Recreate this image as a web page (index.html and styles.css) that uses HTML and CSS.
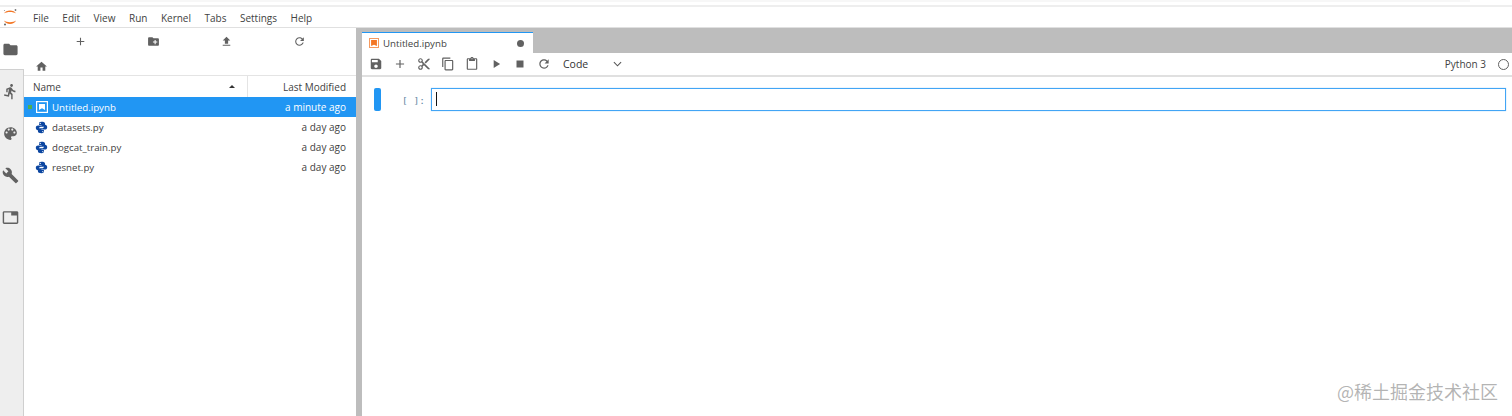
FILE: index.html
```html
<!DOCTYPE html>
<html lang="en">
<head>
<meta charset="utf-8">
<title>JupyterLab</title>
<link rel="stylesheet" href="styles.css">
</head>
<body>
<svg class="defs" aria-hidden="true">
  <defs>
    <symbol id="i-folder" viewBox="0 0 24 24"><path d="M10 4H4c-1.1 0-2 .9-2 2v12c0 1.1.9 2 2 2h16c1.1 0 2-.9 2-2V8c0-1.1-.9-2-2-2h-8l-2-2z"/></symbol>
    <symbol id="i-add" viewBox="0 0 24 24"><path d="M19 13h-6v6h-2v-6H5v-2h6V5h2v6h6v2z"/></symbol>
    <symbol id="i-newfolder" viewBox="0 0 24 24"><path d="M20 6h-8l-2-2H4c-1.11 0-1.99.89-1.99 2L2 18c0 1.11.89 2 2 2h16c1.11 0 2-.89 2-2V8c0-1.11-.89-2-2-2zm-1 8h-3v3h-2v-3h-3v-2h3V9h2v3h3v2z"/></symbol>
    <symbol id="i-upload" viewBox="0 0 24 24"><path d="M9 16h6v-6h4l-7-7-7 7h4zm-4 2h14v2H5z"/></symbol>
    <symbol id="i-refresh" viewBox="0 0 24 24"><path d="M17.65 6.35C16.2 4.9 14.21 4 12 4c-4.42 0-7.99 3.58-7.99 8s3.57 8 7.99 8c3.73 0 6.84-2.55 7.73-6h-2.08c-.82 2.33-3.04 4-5.65 4-3.31 0-6-2.69-6-6s2.69-6 6-6c1.66 0 3.14.69 4.22 1.78L13 11h7V4l-2.35 2.35z"/></symbol>
    <symbol id="i-home" viewBox="0 0 24 24"><path d="M10 20v-6h4v6h5v-8h3L12 3 2 12h3v8z"/></symbol>
    <symbol id="i-running" viewBox="0 0 24 24"><path d="M13.49 5.48c1.1 0 2-.9 2-2s-.9-2-2-2-2 .9-2 2 .9 2 2 2zm-3.6 13.9l1-4.4 2.1 2v6h2v-7.5l-2.1-2 .6-3c1.3 1.5 3.3 2.5 5.5 2.5v-2c-1.9 0-3.5-1-4.3-2.4l-1-1.6c-.4-.6-1-1-1.7-1-.3 0-.5.1-.8.1l-5.2 2.2v4.7h2v-3.4l1.8-.7-1.6 8.1-4.9-1-.4 2 7 1.4z"/></symbol>
    <symbol id="i-palette" viewBox="0 0 24 24"><path d="M12 3c-4.97 0-9 4.03-9 9s4.03 9 9 9c.83 0 1.5-.67 1.5-1.5 0-.39-.15-.74-.39-1.01-.23-.26-.38-.61-.38-.99 0-.83.67-1.5 1.5-1.5H16c2.76 0 5-2.24 5-5 0-4.42-4.03-8-9-8zm-5.5 9c-.83 0-1.5-.67-1.5-1.5S5.67 9 6.5 9 8 9.67 8 10.5 7.33 12 6.5 12zm3-4C8.67 8 8 7.33 8 6.5S8.67 5 9.5 5s1.5.67 1.5 1.5S10.33 8 9.5 8zm5 0c-.83 0-1.5-.67-1.5-1.5S13.67 5 14.5 5s1.5.67 1.5 1.5S15.33 8 14.5 8zm3 4c-.83 0-1.5-.67-1.5-1.5S16.67 9 17.5 9s1.5.67 1.5 1.5-.67 1.5-1.5 1.5z"/></symbol>
    <symbol id="i-build" viewBox="0 0 24 24"><path d="M22.7 19l-9.1-9.1c.9-2.3.4-5-1.5-6.9-2-2-5-2.4-7.4-1.3L9 6 6 9 1.6 4.7C.4 7.1.9 10.1 2.9 12.1c1.9 1.9 4.6 2.4 6.9 1.5l9.1 9.1c.4.4 1 .4 1.4 0l2.3-2.3c.5-.4.5-1.1.1-1.4z"/></symbol>
    <symbol id="i-tab" viewBox="0 0 24 24"><path d="M21 3H3c-1.1 0-2 .9-2 2v14c0 1.1.9 2 2 2h18c1.1 0 2-.9 2-2V5c0-1.1-.9-2-2-2zm0 16H3V5h10v4h8v10z"/></symbol>
    <symbol id="i-save" viewBox="0 0 24 24"><path d="M17 3H5c-1.11 0-2 .9-2 2v14c0 1.1.89 2 2 2h14c1.1 0 2-.9 2-2V7l-4-4zm-5 16c-1.66 0-3-1.34-3-3s1.34-3 3-3 3 1.34 3 3-1.34 3-3 3zm3-10H5V5h10v4z"/></symbol>
    <symbol id="i-cut" viewBox="0 0 24 24"><path d="M9.64 7.64c.23-.5.36-1.05.36-1.64 0-2.21-1.79-4-4-4S2 3.79 2 6s1.79 4 4 4c.59 0 1.14-.13 1.64-.36L10 12l-2.36 2.36C7.14 14.13 6.59 14 6 14c-2.21 0-4 1.79-4 4s1.79 4 4 4 4-1.79 4-4c0-.59-.13-1.14-.36-1.64L12 14l7 7h3v-1L9.64 7.64zM6 8c-1.1 0-2-.89-2-2s.9-2 2-2 2 .89 2 2-.9 2-2 2zm0 12c-1.1 0-2-.89-2-2s.9-2 2-2 2 .89 2 2-.9 2-2 2zm6-7.5c-.28 0-.5-.22-.5-.5s.22-.5.5-.5.5.22.5.5-.22.5-.5.5zM19 3l-6 6 2 2 7-7V3z"/></symbol>
    <symbol id="i-copy" viewBox="0 0 24 24"><path d="M16 1H4c-1.1 0-2 .9-2 2v14h2V3h12V1zm3 4H8c-1.1 0-2 .9-2 2v14c0 1.1.9 2 2 2h11c1.1 0 2-.9 2-2V7c0-1.1-.9-2-2-2zm0 16H8V7h11v14z"/></symbol>
    <symbol id="i-paste" viewBox="0 0 24 24"><path d="M19 2h-4.18C14.4.84 13.3 0 12 0c-1.3 0-2.4.84-2.82 2H5c-1.1 0-2 .9-2 2v16c0 1.1.9 2 2 2h14c1.1 0 2-.9 2-2V4c0-1.1-.9-2-2-2zm-7 0c.55 0 1 .45 1 1s-.45 1-1 1-1-.45-1-1 .45-1 1-1zm7 18H5V4h2v3h10V4h2v16z"/></symbol>
    <symbol id="i-play" viewBox="0 0 24 24"><path d="M8 5v14l11-7z"/></symbol>
    <symbol id="i-stop" viewBox="0 0 24 24"><path d="M6 6h12v12H6z"/></symbol>
    <symbol id="i-python" viewBox="0 0 24 24"><path fill="#0d47a1" d="M11.900 1.500C8 1.500 7.500 3.200 7.500 4.500v2.700h4.700v1H5.500C3.300 8.200 1.500 9.700 1.500 12.500c0 2.700 1.500 4.500 3.700 4.500h2.300v-3c0-1.900 1.500-3.300 3.400-3.300h5c1.500 0 2.600-1.200 2.600-2.700V4.500c0-1.700-2.200-3-6.600-3zM9.700 3.300a1.100 1.100 0 1 1 0 2.200 1.100 1.100 0 0 1 0-2.200z"/><path fill="#0d47a1" d="M12.100 22.500c3.900 0 4.400-1.700 4.400-3v-2.700h-4.700v-1h6.700c2.200 0 4-1.500 4-4.300 0-2.700-1.500-4.500-3.700-4.500h-2.300v3c0 1.900-1.500 3.300-3.400 3.300h-5c-1.500 0-2.600 1.200-2.600 2.700V19.500c0 1.700 2.200 3 6.600 3zm2.200-1.800a1.100 1.100 0 1 1 0-2.200 1.100 1.100 0 0 1 0 2.200z"/></symbol>
  </defs>
</svg>

<div class="top-strip"><div class="top-strip-fill"></div></div>

<header class="menubar">
  <svg class="logo" viewBox="0 0 16 20" aria-hidden="true">
    <path fill="#f37726" d="M2 6.500C3.500 2.500 12.500 2.500 14 6.500 11.500 4.500 4.500 4.500 2 6.500zM2 13.500C4.500 15.700 11.500 15.700 14 13.500 12.500 18 3.500 18 2 13.500z"/>
    <circle cx="13.500" cy="3" r=".9" fill="#767677"/>
    <circle cx="3" cy="17.500" r="1" fill="#616262"/>
    <circle cx="2.500" cy="3.500" r=".6" fill="#989798"/>
  </svg>
  <nav class="menu">
    <span>File</span><span>Edit</span><span>View</span><span>Run</span><span>Kernel</span><span>Tabs</span><span>Settings</span><span>Help</span>
  </nav>
</header>

<main class="main">
  <aside class="sidebar">
    <div class="side-item side-active"><svg class="side-icon"><use href="#i-folder"/></svg></div>
    <div class="side-item"><svg class="side-icon"><use href="#i-running"/></svg></div>
    <div class="side-item"><svg class="side-icon"><use href="#i-palette"/></svg></div>
    <div class="side-item"><svg class="side-icon"><use href="#i-build"/></svg></div>
    <div class="side-item"><svg class="side-icon"><use href="#i-tab"/></svg></div>
  </aside>

  <section class="browser">
    <div class="browser-tools">
      <div class="tool-cell"><svg class="tool-icon"><use href="#i-add"/></svg></div>
      <div class="tool-cell"><svg class="tool-icon"><use href="#i-newfolder"/></svg></div>
      <div class="tool-cell"><svg class="tool-icon"><use href="#i-upload"/></svg></div>
      <div class="tool-cell"><svg class="tool-icon"><use href="#i-refresh"/></svg></div>
    </div>
    <div class="crumbs"><svg class="tool-icon"><use href="#i-home"/></svg></div>
    <div class="list-head">
      <div class="head-name">Name<span class="sort-caret"></span></div>
      <div class="head-mod">Last Modified</div>
    </div>
    <div class="file-row file-selected">
      <span class="run-dot"></span>
      <svg class="nb-icon" viewBox="0 0 12 12"><rect x=".6" y=".6" width="10.800" height="10.800" fill="none" stroke="#fff" stroke-width="1.200"/><path fill="#fff" d="M3 3h6v6L6 7.200 3 9z"/></svg>
      <span class="file-name">Untitled.ipynb</span>
      <span class="file-date">a minute ago</span>
    </div>
    <div class="file-row">
      <span class="run-dot run-off"></span>
      <svg class="py-icon"><use href="#i-python"/></svg>
      <span class="file-name">datasets.py</span>
      <span class="file-date">a day ago</span>
    </div>
    <div class="file-row">
      <span class="run-dot run-off"></span>
      <svg class="py-icon"><use href="#i-python"/></svg>
      <span class="file-name">dogcat_train.py</span>
      <span class="file-date">a day ago</span>
    </div>
    <div class="file-row">
      <span class="run-dot run-off"></span>
      <svg class="py-icon"><use href="#i-python"/></svg>
      <span class="file-name">resnet.py</span>
      <span class="file-date">a day ago</span>
    </div>
  </section>

  <section class="notebook">
    <div class="tabbar">
      <div class="tab">
        <svg class="tab-icon" viewBox="0 0 12 12"><rect x=".6" y=".6" width="10.800" height="10.800" fill="none" stroke="#f59a5f" stroke-width="1.200"/><path fill="#f37726" d="M2.500 2.500h7v7L6 8 2.500 9.500z"/></svg>
        <span class="tab-label">Untitled.ipynb</span>
        <span class="tab-dot"></span>
      </div>
    </div>
    <div class="nb-toolbar">
      <svg class="nb-tool"><use href="#i-save"/></svg>
      <svg class="nb-tool"><use href="#i-add"/></svg>
      <svg class="nb-tool"><use href="#i-cut"/></svg>
      <svg class="nb-tool"><use href="#i-copy"/></svg>
      <svg class="nb-tool"><use href="#i-paste"/></svg>
      <svg class="nb-tool"><use href="#i-play"/></svg>
      <svg class="nb-tool"><use href="#i-stop"/></svg>
      <svg class="nb-tool"><use href="#i-refresh"/></svg>
      <div class="cell-type">
        <span>Code</span>
        <svg class="chev" viewBox="0 0 10 6"><path d="M1 1l4 4 4-4" fill="none" stroke="#555" stroke-width="1.200"/></svg>
      </div>
      <div class="kernel">
        <span>Python 3</span>
        <span class="kernel-ring"></span>
      </div>
    </div>
    <div class="cell">
      <div class="collapser"></div>
      <div class="prompt">[ ]:</div>
      <div class="editor"><span class="caret"></span></div>
    </div>
  </section>
</main>

<div class="watermark">@稀土掘金技术社区</div>
</body>
</html>
```

FILE: styles.css
```css
* { box-sizing: border-box; }

html, body {
  margin: 0;
  height: 416px;
  overflow: hidden;
  background: #fff;
  color: #424242;
  font-family: "Open Sans", "Noto Sans", sans-serif;
  font-size: 10px;
}

body {
  display: flex;
  flex-direction: column;
  position: relative;
}

.defs { width: 0; height: 0; position: absolute; }

.top-strip {
  height: 7px;
  border-bottom: 2px solid #eeeeee;
  flex: none;
}
.top-strip-fill {
  width: 1380px;
  height: 2px;
  margin-left: 90px;
  background: #f7f7f7;
}

.menubar {
  height: 20px;
  flex: none;
  display: flex;
  align-items: center;
  padding-top: 1px;
}
.logo { width: 16px; height: 20px; margin-left: 2px; margin-top: -1px; flex: none; }
.menu { display: flex; gap: 13.500px; margin-left: 15px; color: #424242; }

.main {
  flex: 1;
  display: flex;
  min-height: 0;
  border-top: 1px solid #e0e0e0;
}

.sidebar {
  width: 24px;
  flex: none;
  background: #eeeeee;
  border-right: 1px solid #cfcfcf;
  display: flex;
  flex-direction: column;
}
.side-item {
  height: 42px;
  padding-right: 2px;
  display: flex;
  align-items: center;
  justify-content: center;
  margin-right: 1px;
}
.side-active {
  background: #fff;
  margin-right: -1px;
  padding: 2px 4px 0 0;
  position: relative;
  border-bottom: 1px solid #d0d0d0;
}
.side-icon { width: 17px; height: 17px; fill: #616161; }

.browser {
  width: 332px;
  flex: none;
  display: flex;
  flex-direction: column;
  background: #fff;
}
.browser-tools { display: flex; height: 25px; padding: 2px 0 0 20px; }
.tool-cell {
  width: 73px;
  display: flex;
  justify-content: center;
  align-items: center;
}
.tool-icon { width: 13px; height: 13px; fill: #616161; }

.crumbs {
  height: 23px;
  padding: 4px 0 0 11px;
  display: flex;
  align-items: center;
  border-bottom: 1px solid #e4e4e4;
}

.list-head {
  height: 21px;
  flex: none;
  display: flex;
  align-items: center;
  color: #424242;
}
.head-name {
  width: 224px;
  height: 100%;
  padding: 0 10px 0 9px;
  display: flex;
  align-items: center;
  justify-content: space-between;
  border-right: 1px solid #e4e4e4;
}
.sort-caret {
  width: 0;
  height: 0;
  margin-right: 2px;
  border-left: 3.500px solid transparent;
  border-right: 3.500px solid transparent;
  border-bottom: 3.500px solid #333;
}
.head-mod { flex: 1; text-align: right; padding-right: 10px; }

.file-row {
  height: 20px;
  display: flex;
  align-items: center;
  color: #424242;
}
.file-selected { background: #2196f3; color: #fff; }
.run-dot { width: 4px; height: 4px; margin-left: 4px; background: #4caf50; flex: none; }
.run-off { background: transparent; }
.nb-icon { width: 12px; height: 12px; margin-left: 4px; flex: none; }
.py-icon { width: 13px; height: 13px; margin-left: 3px; flex: none; }
.file-name { margin-left: 4px; flex: 1; font-size: 9.700px; }
.file-date { padding-right: 10px; }

.notebook {
  flex: 1;
  min-width: 0;
  border-left: 6px solid #bdbdbd;
  display: flex;
  flex-direction: column;
}

.tabbar {
  height: 25px;
  flex: none;
  background: #bdbdbd;
  display: flex;
  align-items: flex-end;
}
.tab {
  width: 171px;
  height: 21px;
  background: #fff;
  border-top: 1px solid #2196f3;
  display: flex;
  align-items: center;
  padding: 0 9px 0 7px;
}
.tab-icon { width: 10px; height: 10px; flex: none; }
.tab-label { margin-left: 4px; flex: 1; font-size: 9.700px; }
.tab-dot { width: 7px; height: 7px; border-radius: 50%; background: #616161; }

.nb-toolbar {
  height: 24px;
  flex: none;
  display: flex;
  align-items: center;
  padding-left: 7px;
  gap: 10px;
  border-bottom: 2px solid #e0e0e0;
}
.nb-tool { width: 14px; height: 14px; fill: #616161; flex: none; }

.cell-type {
  width: 59px;
  display: flex;
  justify-content: space-between;
  align-items: center;
  margin-left: 2px;
  color: #333;
  font-size: 10.500px;
}
.chev { width: 9px; height: 6px; }

.kernel {
  margin-left: auto;
  display: flex;
  align-items: center;
  gap: 12px;
  padding-right: 3px;
}
.kernel-ring {
  width: 11px;
  height: 11px;
  border: 1px solid #616161;
  border-radius: 50%;
}

.cell {
  margin-top: 11px;
  height: 23px;
  display: flex;
  padding-left: 12px;
  padding-right: 6px;
}
.collapser {
  width: 7px;
  height: 23px;
  background: #2196f3;
  border-radius: 2px;
  flex: none;
}
.prompt {
  width: 50px;
  flex: none;
  text-align: right;
  padding: 1px 6px 0 0;
  font-family: "DejaVu Sans Mono", monospace;
  font-size: 9.500px;
  line-height: 23px;
  color: #5f87a3;
}
.editor {
  flex: 1;
  height: 23px;
  border: 1px solid #42a5f5;
  box-shadow: 0 0 1px #90caf9;
  padding: 3px 0 0 4px;
}
.caret { display: block; width: 1px; height: 14px; background: #111; }

.watermark {
  position: absolute;
  right: 14px;
  bottom: 13px;
  font-family: "Noto Sans CJK SC", sans-serif;
  font-size: 18px;
  line-height: 24px;
  color: rgba(130, 130, 130, .6);
}
```
